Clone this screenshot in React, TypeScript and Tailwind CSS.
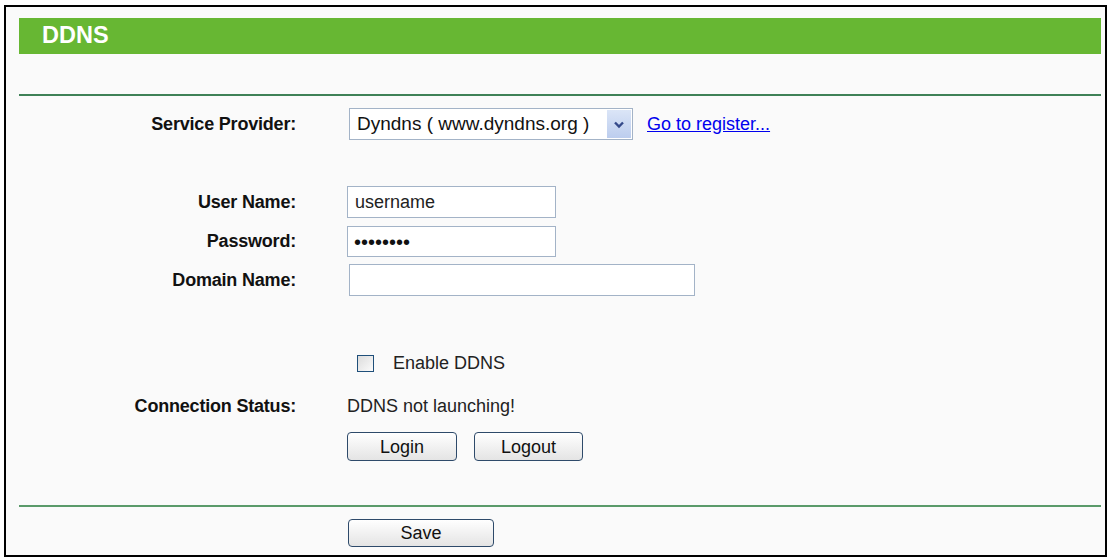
import { ReactNode } from "react";

const font = "font-['Liberation_Sans',Arial,sans-serif]";

const Row = ({ label, children, className }: { label?: string; children: ReactNode; className: string }) => (
  <div className={`flex items-center ${className}`}>
    <div className="w-[290px] shrink-0 text-right text-[18px] font-bold text-[#111] tracking-[-0.2px]">{label}</div>
    <div className="ml-[51px] flex items-center">{children}</div>
  </div>
);

const Btn = ({ text, w, h }: { text: string; w: string; h: string }) => (
  <button
    className={`${w} ${h} rounded-[4px] border border-[#2e4a6a] bg-gradient-to-b from-[#ffffff] to-[#e4e4e4] text-[18px] text-[#111] leading-none`}
  >
    {text}
  </button>
);

export default function App() {
  return (
    <div className={`min-h-[559px] bg-white pl-[4px] pt-[5px] ${font}`}>
      <div className="w-[1103px] h-[552px] border-2 border-black bg-[#fafafa]">
        <div className="mt-[11px] ml-[13px] w-[1082px] h-[36px] bg-[#67b733] flex items-center pl-[23px]">
          <span className="text-white font-bold text-[23.5px] leading-none">DDNS</span>
        </div>
        <div className="mt-[40px] ml-[13px] w-[1082px] h-[2px] bg-[#3f8157]" />

        <Row label="Service Provider:" className="mt-[12px] h-[32px]">
          <div className="ml-[2px] w-[284px] h-[32px] border border-[#a3b3c7] bg-white flex items-center">
            <span className="pl-[7px] text-[19px] text-[#111] whitespace-nowrap flex-1">Dyndns ( www.dyndns.org )</span>
            <div className="mr-[1px] w-[24px] h-[28px] bg-gradient-to-b from-[#dbe5f7] to-[#bccdee] flex items-center justify-center">
              <svg width="12" height="9" viewBox="0 0 12 9">
                <path d="M2 2.5 L6 6.5 L10 2.5" fill="none" stroke="#34498a" strokeWidth="2.4" />
              </svg>
            </div>
          </div>
          <a href="#" className="ml-[14px] text-[18px] text-[#0000ee] underline whitespace-nowrap">
            Go to register...
          </a>
        </Row>

        <Row label="User Name:" className="mt-[46px] h-[32px]">
          <div className="w-[209px] h-[32px] border border-[#a3b3c7] bg-white flex items-center pl-[7px] text-[18px] text-[#222]">
            username
          </div>
        </Row>
        <Row label="Password:" className="mt-[8px] h-[31px]">
          <div className="w-[209px] h-[31px] border border-[#a3b3c7] bg-white flex items-center pl-[6px] text-[20px] text-[#111] leading-none">
            ••••••••
          </div>
        </Row>
        <Row label="Domain Name:" className="mt-[7px] h-[32px]">
          <div className="ml-[2px] w-[346px] h-[32px] border border-[#a3b3c7] bg-white" />
        </Row>

        <Row className="mt-[57px] h-[20px]">
          <div className="ml-[10px] w-[17px] h-[17px] border border-[#1f4f7a] bg-gradient-to-br from-[#dcdcdc] to-[#fbfbfb]" />
          <span className="ml-[19px] text-[18px] text-[#222]">Enable DDNS</span>
        </Row>
        <Row label="Connection Status:" className="mt-[23px] h-[20px]">
          <span className="text-[18px] text-[#222]">DDNS not launching!</span>
        </Row>
        <Row className="mt-[16px] h-[29px]">
          <Btn text="Login" w="w-[110px]" h="h-[29px]" />
          <div className="ml-[17px]">
            <Btn text="Logout" w="w-[109px]" h="h-[29px]" />
          </div>
        </Row>

        <div className="mt-[44px] ml-[13px] w-[1082px] h-[2px] bg-[#5a9a6a]" />
        <Row className="mt-[12px] h-[28px]">
          <div className="ml-[1px]">
            <Btn text="Save" w="w-[146px]" h="h-[28px]" />
          </div>
        </Row>
      </div>
    </div>
  );
}
